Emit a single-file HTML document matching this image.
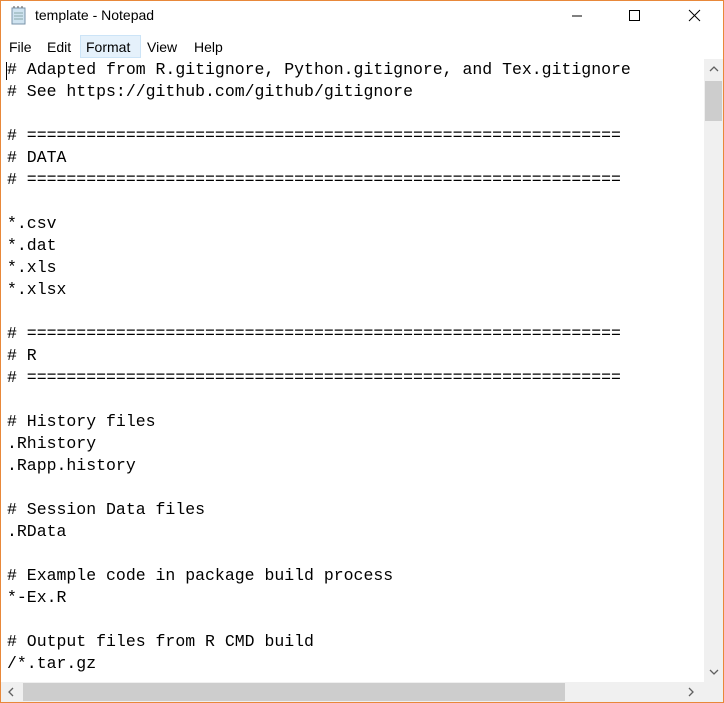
<html><head><style>
body{margin:0;width:724px;height:703px;overflow:hidden;background:#fff;font-family:"Liberation Sans",sans-serif}
.win{position:absolute;left:0;top:0;width:722px;height:701px;border:1px solid #e8883a;background:#fff}
.title{position:absolute;left:34px;top:6px;font-size:14px;color:#000}
.menu{position:absolute;top:35px;left:0;height:22px;font-size:14px;}
.menu span{position:absolute;top:3px}
.fmt{position:absolute;left:79px;top:34px;width:61px;height:23px;background:#e5f1fb;border:1px solid #cce4f7;box-sizing:border-box}
pre{position:absolute;left:6px;top:58px;margin:0;font-family:"Liberation Mono",monospace;font-size:16.5px;line-height:22px;color:#000}
.vs{position:absolute;left:703px;top:58px;width:19px;height:623px;background:#f0f0f0}
.hs{position:absolute;left:0;top:681px;width:703px;height:20px;background:#f0f0f0}
.corner{position:absolute;left:703px;top:681px;width:19px;height:20px;background:#f0f0f0}
</style></head><body><div class="win">
<svg style="position:absolute;left:9px;top:5px" width="18" height="20"><rect x="2" y="2" width="13" height="16" fill="#cfe3f0" stroke="#7a93a8"/><line x1="4" y1="2" x2="4" y2="0" stroke="#555"/><line x1="8" y1="2" x2="8" y2="0" stroke="#555"/><line x1="12" y1="2" x2="12" y2="0" stroke="#555"/><line x1="4" y1="7" x2="13" y2="7" stroke="#8aa"/><line x1="4" y1="10" x2="13" y2="10" stroke="#8aa"/><line x1="4" y1="13" x2="13" y2="13" stroke="#8aa"/></svg>
<div class="title">template - Notepad</div>
<svg style="position:absolute;left:560px;top:0" width="162" height="30"><line x1="11" y1="15" x2="21" y2="15" stroke="#000"/><rect x="68.5" y="9.5" width="10" height="10" fill="none" stroke="#000"/><path d="M128 9l11 11M139 9l-11 11" stroke="#000"/></svg>
<div class="fmt"></div>
<div class="menu"><span style="left:8px">File</span><span style="left:46px">Edit</span><span style="left:85px">Format</span><span style="left:146px">View</span><span style="left:193px">Help</span></div>
<pre># Adapted from R.gitignore, Python.gitignore, and Tex.gitignore
# See https://github.com/github/gitignore

# ============================================================
# DATA
# ============================================================

*.csv
*.dat
*.xls
*.xlsx

# ============================================================
# R
# ============================================================

# History files
.Rhistory
.Rapp.history

# Session Data files
.RData

# Example code in package build process
*-Ex.R

# Output files from R CMD build
/*.tar.gz</pre>
<div style="position:absolute;left:5px;top:61px;width:1px;height:18px;background:#000"></div>
<div class="vs"><div style="position:absolute;left:1px;top:22px;width:17px;height:40px;background:#cdcdcd"></div>
<svg style="position:absolute;left:5px;top:6px" width="10" height="8"><path d="M1 6l4-4 4 4" fill="none" stroke="#606060" stroke-width="1.3"/></svg>
<svg style="position:absolute;left:5px;top:609px" width="10" height="8"><path d="M1 2l4 4 4-4" fill="none" stroke="#606060" stroke-width="1.3"/></svg></div>
<div class="hs"><div style="position:absolute;left:22px;top:1px;width:542px;height:18px;background:#cdcdcd"></div>
<svg style="position:absolute;left:6px;top:5px" width="8" height="10"><path d="M6 1l-4 4 4 4" fill="none" stroke="#606060" stroke-width="1.3"/></svg>
<svg style="position:absolute;left:686px;top:5px" width="8" height="10"><path d="M2 1l4 4-4 4" fill="none" stroke="#606060" stroke-width="1.3"/></svg></div>
<div class="corner"></div>
</div></body></html>
